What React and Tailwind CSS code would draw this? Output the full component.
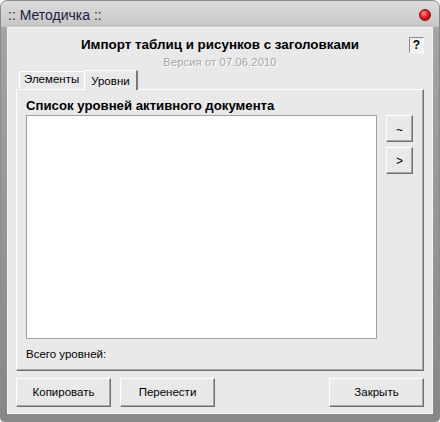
import React from "react";

const font = { fontFamily: '"Liberation Sans", Arial, sans-serif' };

function Btn({ className = "", children }) {
  return (
    <div
      className={
        "flex items-center justify-center bg-[#e9e9e9] border-t border-l border-white border-r border-b border-r-[#707070] border-b-[#707070] shadow-[inset_-1px_-1px_0_#a8a8a8] text-[11.5px] text-black " +
        className
      }
    >
      {children}
    </div>
  );
}

export default function App() {
  return (
    <div className="w-[440px] h-[422px] overflow-hidden bg-[#ffffff]" style={font}>
      <div className="w-[440px] h-[422px] flex flex-col rounded-t-[7px] rounded-b-[4px] bg-linear-to-b from-[#a6a6a6] to-[#878787] border border-[#8a8a8a]">
        {/* title bar */}
        <div className="h-[26px] shrink-0 flex items-center justify-between pl-[7px] pr-[8px] rounded-t-[6px] bg-linear-to-b from-[#dcdcdc] to-[#c6c6c6]">
          <span className="text-[14px] text-[#1c1c3c] mt-[2px]">:: Методичка ::</span>
          <div className="w-[12px] h-[12px] rounded-full border border-[#7a1010] bg-[radial-gradient(circle_at_40%_35%,#ff9a9a_0%,#e81c1c_45%,#a00000_100%)] mt-[1px]" />
        </div>
        {/* body */}
        <div className="flex-1 flex px-[6px] pb-[7px]">
          <div className="flex-1 flex flex-col bg-[#e9e9e9] border border-[#f6f6f6] px-[8px]">
            {/* header */}
            <div className="relative h-[41px] shrink-0 flex flex-col items-center">
              <div className="mt-[9px] text-[13.4px] font-bold text-black leading-[16px]">
                Импорт таблиц и рисунков с заголовками
              </div>
              <div className="mt-[3px] text-[11px] tracking-[0.2px] text-[#a4a4a4] leading-[12px] [text-shadow:1px_1px_0_#ffffff]">
                Версия от 07.06.2010
              </div>
              <div className="absolute right-[0px] top-[9px] w-[15px] h-[16px] flex items-center justify-center border border-t-[#8a8a8a] border-l-[#8a8a8a] border-r-white border-b-white bg-[#f0f0f0] text-[12px] font-bold text-black leading-none">
                ?
              </div>
            </div>
            {/* tabs */}
            <div className="h-[20px] shrink-0 flex items-end pl-[3px] relative z-10">
              <div className="h-[17px] mb-[1px] pl-[4px] pr-[5px] flex items-center border-t border-l border-white text-[11.5px] text-black">
                Элементы
              </div>
              <div className="h-[20px] -mb-[1px] pl-[6px] pr-[6px] flex items-start pt-[2px] bg-[#e9e9e9] border-t border-l border-white border-r-2 border-r-[#7a7a7a] text-[11.5px] text-black">
                Уровни
              </div>
            </div>
            {/* panel */}
            <div className="h-[282px] shrink-0 flex flex-col border-t border-l border-white border-r border-b border-r-[#707070] border-b-[#707070] shadow-[inset_-1px_-1px_0_#a8a8a8] pl-[9px] pr-[10px]">
              <div className="mt-[8px] text-[13.2px] font-bold text-black leading-[15px]">
                Список уровней активного документа
              </div>
              <div className="flex mt-[2px] gap-[9px]">
                <div className="w-[351px] h-[224px] bg-white border border-[#a0a0a0]" />
                <div className="flex flex-col gap-[5px]">
                  <Btn className="w-[27px] h-[27px] text-[12px]">
                    <span className="mt-[3px]">~</span>
                  </Btn>
                  <Btn className="w-[27px] h-[27px] text-[12px]">&gt;</Btn>
                </div>
              </div>
              <div className="mt-[8px] text-[11.5px] text-black leading-[14px]">Всего уровней:</div>
            </div>
            {/* bottom buttons */}
            <div className="flex mt-[7px] gap-[9px]">
              <Btn className="w-[95px] h-[29px]">Копировать</Btn>
              <Btn className="w-[95px] h-[29px]">Перенести</Btn>
              <div className="flex-1" />
              <Btn className="w-[95px] h-[29px]">Закрыть</Btn>
            </div>
          </div>
        </div>
      </div>
    </div>
  );
}
